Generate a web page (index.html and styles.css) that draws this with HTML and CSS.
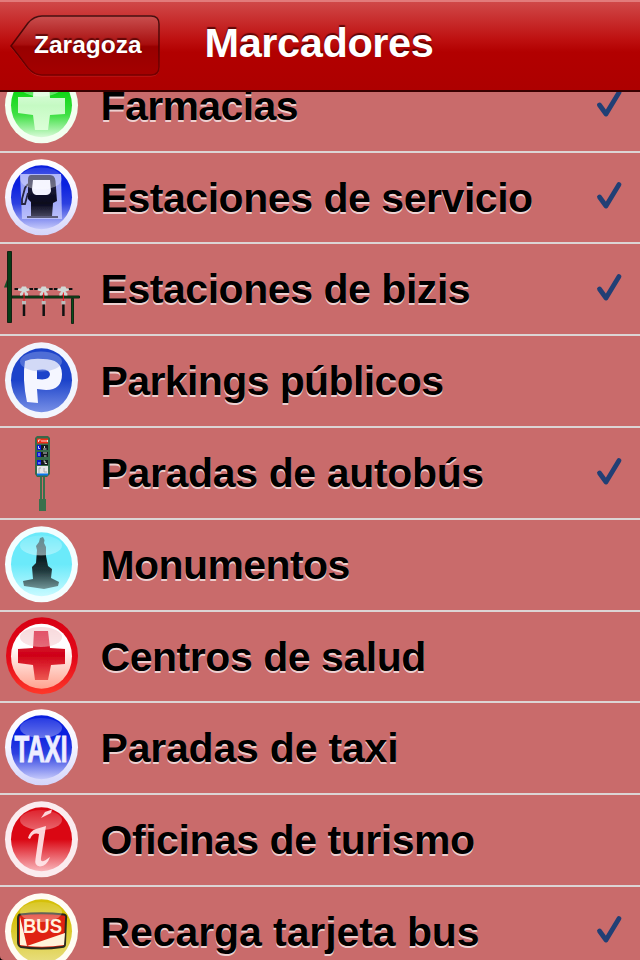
FILE: index.html
```html
<!DOCTYPE html>
<html lang="es">
<head>
<meta charset="utf-8">
<title>Marcadores</title>
<link rel="stylesheet" href="styles.css">
</head>
<body>
<svg class="defs" width="0" height="0" aria-hidden="true">
  <defs>
    <linearGradient id="green" x2="0" y2="1"><stop offset=".3" stop-color="#10d716"/><stop offset=".65" stop-color="#3fe044"/><stop offset="1" stop-color="#d8fbd8"/></linearGradient>
    <linearGradient id="greenCross" x2="0" y2="1"><stop stop-color="#e9fde9"/><stop offset=".5" stop-color="#c5fac3"/><stop offset="1" stop-color="#dcffd8"/></linearGradient>
    <linearGradient id="blue" x2="0" y2="1"><stop offset=".3" stop-color="#0a20df"/><stop offset=".6" stop-color="#2d40e0"/><stop offset="1" stop-color="#c5c9fb"/></linearGradient>
    <linearGradient id="parking" x2="0" y2="1"><stop offset=".5" stop-color="#1c43ca"/><stop offset="1" stop-color="#7890e6"/></linearGradient>
    <linearGradient id="cyan" x2="0" y2="1"><stop offset=".5" stop-color="#6beafa"/><stop offset="1" stop-color="#c8faff"/></linearGradient>
    <linearGradient id="white" x2="0" y2="1"><stop offset=".35" stop-color="#fff"/><stop offset="1" stop-color="#ffa28f"/></linearGradient>
    <linearGradient id="red" x2="0" y2="1"><stop offset=".5" stop-color="#da0713"/><stop offset="1" stop-color="#f9b6bb"/></linearGradient>
    <linearGradient id="redRing" x2="0" y2="1"><stop stop-color="#d90013"/><stop offset=".55" stop-color="#e30a19"/><stop offset="1" stop-color="#ff3829"/></linearGradient>
    <linearGradient id="redCross" x2="0" y2="1"><stop stop-color="#dc304b"/><stop offset=".5" stop-color="#cf0017"/><stop offset="1" stop-color="#ed5852"/></linearGradient>
    <linearGradient id="yellow" x2="0" y2="1"><stop offset=".3" stop-color="#d5c009"/><stop offset="1" stop-color="#e8df83"/></linearGradient>
    <linearGradient id="ring" x2="0" y2="1"><stop stop-color="#fff"/><stop offset=".5" stop-color="#f4f4ff"/><stop offset="1" stop-color="#d4d5fb"/></linearGradient>
    <linearGradient id="pump" x2="0" y2="1"><stop stop-color="#3a3a60"/><stop offset=".4" stop-color="#151530"/><stop offset=".7" stop-color="#08081c"/><stop offset="1" stop-color="#44445c"/></linearGradient>
    <linearGradient id="statue" x2="0" y2="1"><stop stop-color="#477c83"/><stop offset=".34" stop-color="#365960"/><stop offset=".36" stop-color="#071a1d"/><stop offset=".65" stop-color="#20383c"/><stop offset="1" stop-color="#719698"/></linearGradient>
    <linearGradient id="gloss" x2="0" y2="1"><stop stop-color="#fff" stop-opacity=".12"/><stop offset="1" stop-color="#fff" stop-opacity=".38"/></linearGradient>
    <filter id="soft"><feGaussianBlur stdDeviation=".5"/></filter>
    <symbol id="check" viewBox="0 0 30 32"><path d="M4.500 17 11 26 24 4.500" fill="none" stroke="#213f75" stroke-width="4.800" stroke-linecap="round" stroke-linejoin="round"/></symbol>
  </defs>
</svg>

<div class="screen">
  <header class="bar">
    <a class="back">
      <svg class="back-shape" viewBox="0 0 152 64">
        <defs><linearGradient id="btn" x2="0" y2="1"><stop stop-color="#c94f4f"/><stop offset=".48" stop-color="#a80e0e"/><stop offset=".52" stop-color="#980000"/><stop offset="1" stop-color="#a40000"/></linearGradient>
        <linearGradient id="btnLine" x2="0" y2="1"><stop stop-color="#461010"/><stop offset=".5" stop-color="#560000"/><stop offset="1" stop-color="#760000"/></linearGradient></defs>
        <path d="M1 33 Q10 21 18 10Q24 3 32 3H141Q149 3 149 11V54Q149 62 141 62H32Q24 62 18 55Q10 44 1 33Z" fill="none" stroke="#d64040" stroke-opacity=".5"/>
        <path d="M1 32 Q10 20 18 9Q24 2 32 2H141Q149 2 149 10V53Q149 61 141 61H32Q24 61 18 54Q10 43 1 32Z" fill="url(#btn)" stroke="url(#btnLine)" stroke-width="1.500"/>
      </svg>
      <span class="back-label">Zaragoza</span>
    </a>
    <h1 class="title">Marcadores</h1>
  </header>

  <main class="viewport">
    <ul class="list">
      <li class="row">
        <svg class="icon" viewBox="0 0 90 90"><ellipse cx="41.500" cy="44.300" rx="36.500" ry="38" fill="#f2fff0"/><ellipse cx="41.500" cy="44.300" rx="30.500" ry="32" fill="url(#green)"/><path d="M34 20H49L50 37H65V53L50 54 48 69H35L33 54 18 52V36H33Z" fill="url(#greenCross)" filter="url(#soft)"/><ellipse cx="41" cy="25.500" rx="21" ry="10" fill="url(#gloss)"/></svg>
        <span class="label tight">Farmacias</span><svg class="check"><use href="#check"/></svg>
      </li>
      <li class="row">
        <svg class="icon" viewBox="0 0 90 90"><ellipse cx="41.500" cy="44.300" rx="36.500" ry="38" fill="url(#ring)"/><ellipse cx="41.500" cy="44.300" rx="30.500" ry="32" fill="url(#blue)"/><path d="M20 21H61L62 66H22Z" fill="#ccd0ff" opacity=".75"/><g filter="url(#soft)"><path d="M31 22H50Q55 22 55.500 28L57 48 53 50 52 63H31L31 49 28 46 28 27Q28 22 31 22Z" fill="url(#pump)"/><path d="M27 64H58" stroke="#44445c" stroke-width="1.600"/><path d="M28 31 25 35 22 46V51H25L28 40" fill="none" stroke="#26263f" stroke-width="1.800"/><path d="M33 27H50L51 38Q50 42 46 42H36Q32 41 32 36Z" fill="#f2f2ff"/></g><ellipse cx="41" cy="25.500" rx="21" ry="11" fill="url(#gloss)"/></svg>
        <span class="label snug">Estaciones de servicio</span><svg class="check"><use href="#check"/></svg>
      </li>
      <li class="row">
        <svg class="icon" viewBox="0 -1.500 90 90"><path d="M7 34 4 42H8Z" fill="#164f26"/><path d="M7.500 6H11.500V77H7.500Z" fill="#063d16" stroke="#171f13"/><path d="M12 50.500H79.500V52.500H12ZM71.500 53H73.500V78H71.500Z" fill="#075018" stroke="#182317"/>
          <g id="bike"><path d="M29 43.500H33M14.500 43.500H18.500" stroke="#111" stroke-width="2"/><path d="M18 43H21L22 41H26L27 43H29.500V45L26 46 28 48V50H25L24 48 22 50H20V48L22 46 18 45Z" fill="#d2d8d6"/><path d="M24 47V57" stroke="#ed1620"/><path d="M22 55.500H26V59H22Z" fill="#bbb"/><path d="M24 59V70.500" stroke="#111" stroke-width="2.500"/></g><use href="#bike" x="19.700"/><use href="#bike" x="39.400"/></svg>
        <span class="label snug">Estaciones de bizis</span><svg class="check"><use href="#check"/></svg>
      </li>
      <li class="row">
        <svg class="icon" viewBox="0 0 90 90"><ellipse cx="41.500" cy="44.300" rx="36.500" ry="38" fill="#f2f5fd"/><ellipse cx="41.500" cy="44.300" rx="30.500" ry="32" fill="url(#parking)"/><path d="M25 25Q32 22 43 23 62 23 62 38 62 54 46 54L37 53 38 67 27 66Q22 43 25 25ZM37 34V43Q50 45 50 38 49 32 37 34Z" fill="#f5f6ff" fill-rule="evenodd" filter="url(#soft)"/><ellipse cx="41" cy="25.500" rx="21" ry="10" fill="#9dafe9" fill-opacity=".4"/></svg>
        <span class="label tight">Parkings públicos</span>
      </li>
      <li class="row">
        <svg class="icon" viewBox="0 0 90 90"><path d="M37 8H48L50 10V46L47 49H37L35 46V10Z" fill="#37694a"/><path d="M40 49H42V72H40ZM43 49H45V72H43ZM39 71H46V83H39Z" fill="#39704c"/><path d="M37 10.500H48V15.500H37Z" fill="#f02d18"/><path d="M38.500 14V12H40.500M42 14V12M44 12V14M46 12V14M47.500 12V14" fill="none" stroke="#fff" stroke-width=".8"/><path d="M37 17H48V22H37ZM37 24H48V29H37ZM37 32H48V37H37Z" fill="#15191c"/><path d="M37 17H41V22H37ZM37 24H41V29H37ZM37 32H41V37H37Z" fill="#0814d7"/><path d="M38.500 18V20.500H40M39 25V28M38 35H40.500M44.500 18V20M43 21H46.500M43 25H47M44 28H46.500M43.500 33H45V35.500H47" fill="none" stroke="#fff" stroke-width=".8"/><path d="M37 38H48V46H37Z" fill="#e7e5e7"/><path d="M39 45V40H41M44 40V44H47" fill="none" stroke="#aaa"/><path d="M37 45.500H48V47.500H37Z" fill="#0877ed"/></svg>
        <span class="label">Paradas de autobús</span><svg class="check"><use href="#check"/></svg>
      </li>
      <li class="row">
        <svg class="icon" viewBox="0 0 90 90"><ellipse cx="41.500" cy="44.300" rx="36.500" ry="38" fill="#f3feff"/><ellipse cx="41.500" cy="44.300" rx="30.500" ry="32" fill="url(#cyan)"/><path d="M40 18 43 17 44.500 20 44 23 46 27 46 36 48 46 52 49 51 58 59 62 58 66 44 69 24 66 23 61 33 59 32 47 36 43 37 30 36 26 39 22Z" fill="url(#statue)" filter="url(#soft)"/><ellipse cx="41" cy="25.500" rx="21" ry="10" fill="url(#gloss)"/></svg>
        <span class="label tight">Monumentos</span>
      </li>
      <li class="row">
        <svg class="icon" viewBox="0 0 90 90"><ellipse cx="42" cy="43.800" rx="36" ry="38.500" fill="url(#redRing)"/><ellipse cx="41.500" cy="44.300" rx="30.500" ry="32.500" fill="url(#white)"/><ellipse cx="41" cy="25" rx="21" ry="10" fill="#f7d5d8"/><path d="M34 19H48L50 36 65 37V52L51 53 48 68H35L33 53 18 51V37L33 36Z" fill="url(#redCross)" filter="url(#soft)"/><ellipse cx="41" cy="25" rx="21" ry="10" fill="url(#gloss)"/></svg>
        <span class="label snug">Centros de salud</span>
      </li>
      <li class="row">
        <svg class="icon" viewBox="0 0 90 90"><ellipse cx="41.500" cy="44.300" rx="36.500" ry="38" fill="url(#ring)"/><ellipse cx="41.500" cy="44.300" rx="30.500" ry="32" fill="url(#blue)"/><ellipse cx="41" cy="25" rx="21" ry="10" fill="url(#gloss)"/><text class="taxi" x="14.500" y="58.500" textLength="53" lengthAdjust="spacingAndGlyphs">TAXI</text></svg>
        <span class="label open">Paradas de taxi</span>
      </li>
      <li class="row">
        <svg class="icon" viewBox="0 0 90 90"><ellipse cx="41.500" cy="44.300" rx="36.500" ry="38" fill="#fbecef"/><ellipse cx="41.500" cy="44.300" rx="30.500" ry="32" fill="url(#red)"/><ellipse cx="41" cy="25" rx="21" ry="10" fill="url(#gloss)"/><path d="M41 23 45 17 52 14.500 51 18ZM28 43Q30 36 36 34L46 31 41 63Q40 70 50 62 47 71 40 71.500 34 71 35.500 64L39 39Q33 37 30 44Z" fill="#ffe9ec" fill-opacity=".9" filter="url(#soft)"/></svg>
        <span class="label snug">Oficinas de turismo</span>
      </li>
      <li class="row">
        <svg class="icon" viewBox="0 0 90 90"><ellipse cx="41.500" cy="44.300" rx="36.500" ry="38" fill="#fffdf4"/><ellipse cx="41.500" cy="44.300" rx="30.500" ry="32" fill="url(#yellow)"/><path d="M20 27.500Q41 25 64 27.500 67 28 66 32L65 57Q65 60 62 60 41 63 21 60 18 59 18 55L18 32Q18 28 20 27.500Z" fill="#df2312" stroke="#29291c" stroke-width="2"/><path d="M20 30 27 59 20 58ZM27 59 65 46 64 58Q46 61 27 59Z" fill="#fff4da"/><ellipse cx="41" cy="25" rx="21" ry="10" fill="url(#gloss)"/><text class="bus" x="23" y="46" textLength="39" lengthAdjust="spacingAndGlyphs">BUS</text></svg>
        <span class="label wide">Recarga tarjeta bus</span><svg class="check"><use href="#check"/></svg>
      </li>
    </ul>
    <svg class="corner" viewBox="0 0 4 4"><path d="M0 0Q0 4 4 4H0Z"/></svg>
  </main>
</div>
</body>
</html>
```

FILE: styles.css
```css
* { box-sizing: border-box; }

body {
  margin: 0;
  overflow: hidden;
  font-family: "Liberation Sans", Arial, sans-serif;
  font-weight: bold;
}

.defs { position: absolute; }

.screen {
  display: flex;
  flex-direction: column;
  width: 640px;
  height: 960px;
  background: #c96b6b;
}

.bar {
  display: flex;
  flex: none;
  height: 92px;
  padding: 14px 0 0 10px;
  border-top: 2px solid #e27b7b;
  border-bottom: 2px solid #3a0000;
  background: linear-gradient(#d04848 0, #bf1212 36px, #b20000 50px, #ad0000 100%);
}

.back {
  display: grid;
  width: 152px;
  height: 64px;
  margin-top: -2px;
}

.back-shape, .back-label { grid-area: 1 / 1; }

.back-shape { width: 152px; height: 64px; }

.back-label {
  padding: 17px 0 0 24px;
  font-size: 24.5px;
  line-height: 28px;
  color: #fff;
  text-shadow: 0 -2px 1px rgba(70, 0, 0, .75);
}

.title {
  margin: 3px 0 0 42.5px;
  font-size: 41.5px;
  line-height: 48px;
  letter-spacing: -.4px;
  color: #fff;
  text-shadow: 0 -2px 1px rgba(70, 0, 0, .8);
}

.viewport {
  flex: 1;
  min-height: 0;
  position: relative;
  overflow: hidden;
}

.list {
  margin: -31.2px 0 0;
  padding: 0;
  list-style: none;
}

.row {
  display: flex;
  height: 91.8px;
  border-bottom: 2px solid #dcd5d5;
}

.icon { flex: none; width: 90px; height: 90px; }

.label {
  flex: 1;
  padding: 21px 0 0 10.5px;
  font-size: 41px;
  line-height: 48px;
  letter-spacing: -.35px;
  white-space: nowrap;
  color: #000;
  text-shadow: 0 2px 0 rgba(255, 255, 255, .7);
}

.label.tight { letter-spacing: -.6px; }
.label.snug { letter-spacing: -.45px; }
.label.open { letter-spacing: -.2px; }
.label.wide { letter-spacing: -.08px; }

.check {
  flex: none;
  width: 30px;
  height: 32px;
  margin: 27.5px 15px 0 0;
}

.taxi {
  font: bold 37px "Liberation Sans", sans-serif;
  fill: #eeeeff;
  stroke: #eeeeff;
  stroke-width: 1px;
}

.bus {
  font: bold 21px "Liberation Sans", sans-serif;
  fill: #fff2df;
}

.corner {
  position: absolute;
  left: 0;
  bottom: 0;
  width: 4px;
  height: 4px;
}
```
